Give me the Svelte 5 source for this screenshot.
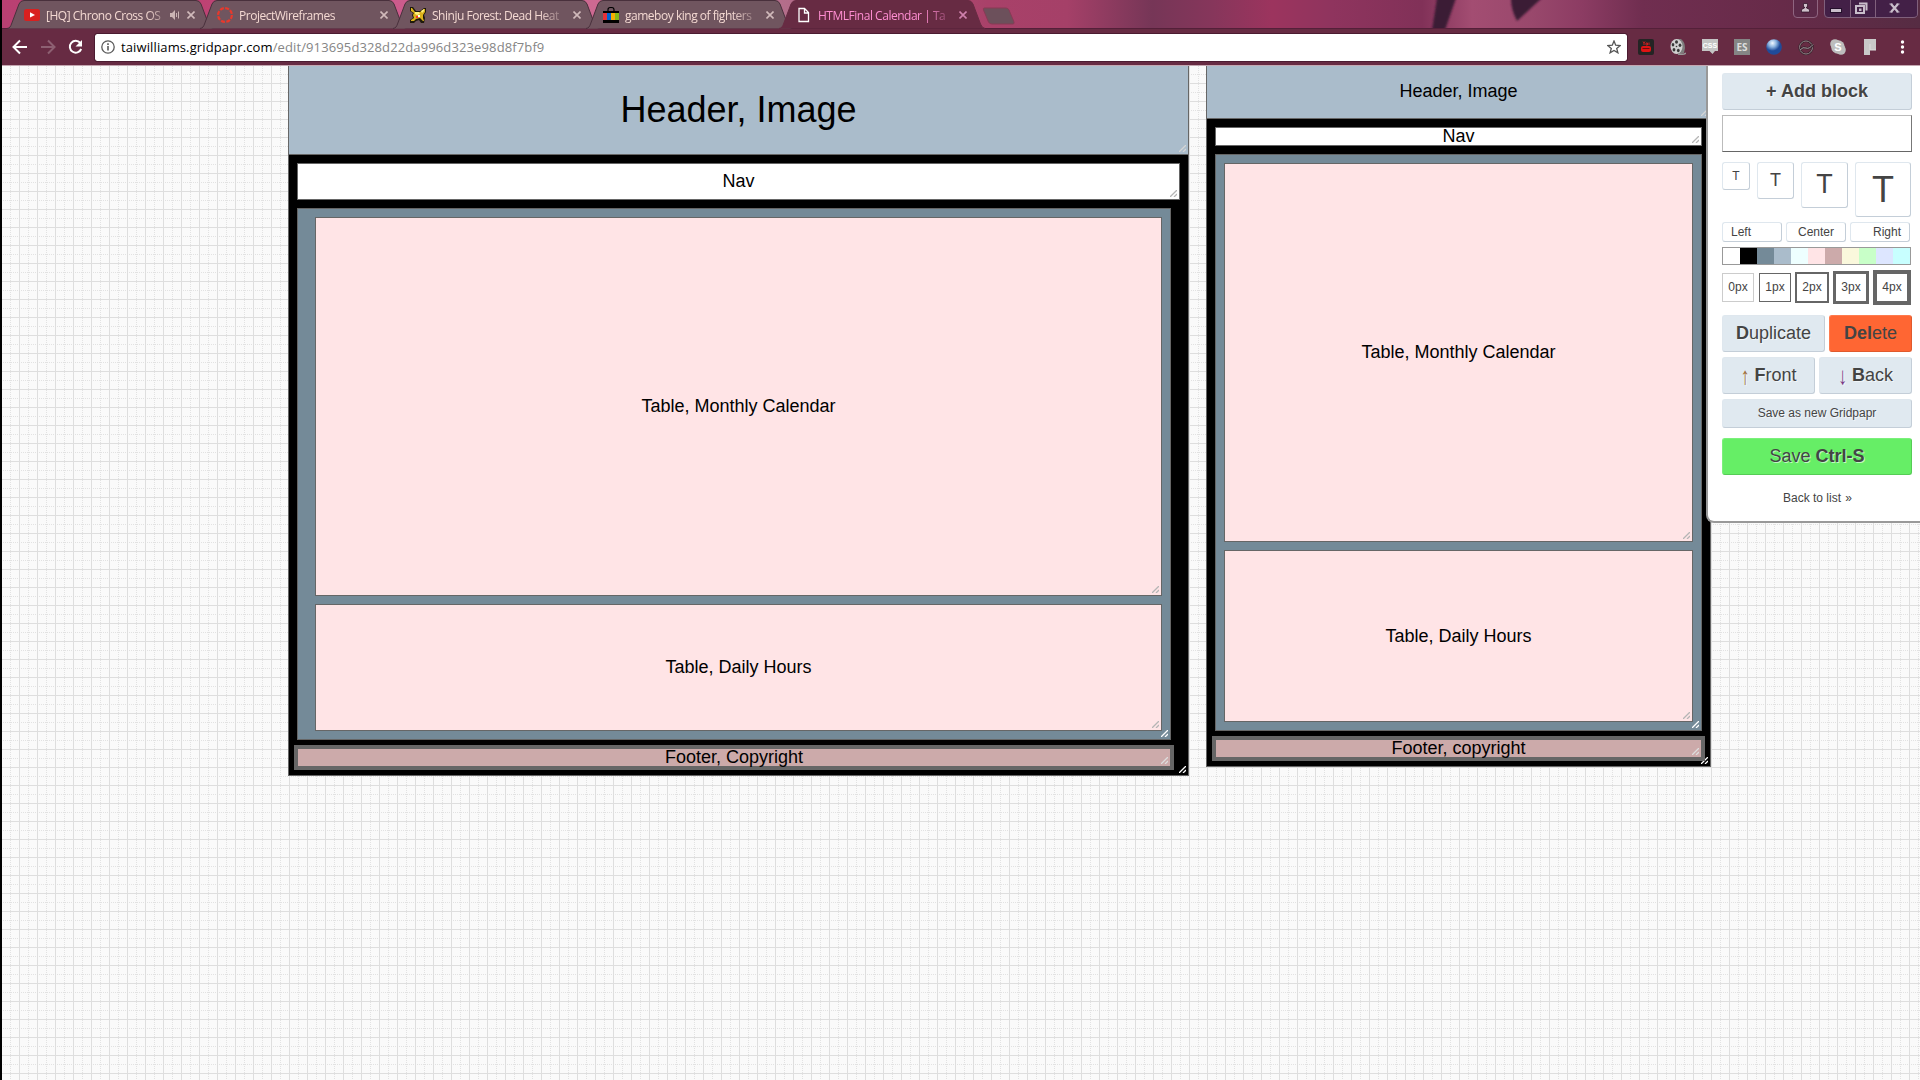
<script>
  const tabs = [
    { title: '[HQ] Chrono Cross OS', icon: 'youtube', audio: true },
    { title: 'ProjectWireframes', icon: 'ring' },
    { title: 'Shinju Forest: Dead Heat', icon: 'creature' },
    { title: 'gameboy king of fighters', icon: 'bag' },
    { title: 'HTMLFinal Calendar | Tai', icon: 'page', active: true }
  ];

  // Blocks on the free canvas: x, y, width, height in page units
  const blocks = [
    { x: 288, y: 64, w: 901, h: 712, c: 'black' },
    { x: 288, y: 64, w: 901, h: 91, c: 'sky', t: 'Header, Image', big: true },
    { x: 297, y: 163, w: 883, h: 37, c: 'white', t: 'Nav' },
    { x: 297, y: 208, w: 874, h: 532, c: 'slate' },
    { x: 315, y: 217, w: 847, h: 379, c: 'pink', t: 'Table, Monthly Calendar' },
    { x: 315, y: 604, w: 847, h: 127, c: 'pink', t: 'Table, Daily Hours' },
    { x: 294, y: 745, w: 880, h: 25, c: 'rose', t: 'Footer, Copyright', thick: true },
    { x: 1206, y: 63, w: 505, h: 704, c: 'black' },
    { x: 1206, y: 63, w: 505, h: 56, c: 'sky', t: 'Header, Image' },
    { x: 1215, y: 127, w: 487, h: 19, c: 'white', t: 'Nav' },
    { x: 1215, y: 154, w: 487, h: 577, c: 'slate' },
    { x: 1224, y: 163, w: 469, h: 379, c: 'pink', t: 'Table, Monthly Calendar' },
    { x: 1224, y: 550, w: 469, h: 172, c: 'pink', t: 'Table, Daily Hours' },
    { x: 1212, y: 736, w: 493, h: 25, c: 'rose', t: 'Footer, copyright', thick: true }
  ];

  const swatches = ['#ffffff', '#000000', '#748a98', '#aabccb', '#eeffff', '#ffe4e6', '#ccaaaa', '#faf8dc', '#c8ffc8', '#dde6ff', '#c8ffff'];
</script>

<div class="window">
  <div class="strip">
    <div class="tabs">
      {#each tabs as tab}
        <div class="tab" class:active={tab.active}>
          <svg class="shape" viewBox="0 0 206 29" width="206" height="29">
            <path d="M0 28.5 C3 28 3.500 26.500 4.500 24 L12 4 Q13.500 .5 17 .5 H189 Q192.500 .5 194 4 L201.500 24 Q203 28 206 28.500" />
          </svg>
          <svg class="fav" viewBox="0 0 16 16" width="16" height="16">
            {#if tab.icon === 'youtube'}
              <rect y="2" width="16" height="12" rx="2.500" fill="#d9201f" /><path d="M6 5.300v5.200L11 8z" fill="#fff" />
            {:else if tab.icon === 'ring'}
              <circle cx="8" cy="8" r="6.900" fill="none" stroke="#e8392c" stroke-width="2.200" stroke-dasharray="4 1.420" />
            {:else if tab.icon === 'creature'}
              <path d="M0 0h3l3 4h4l4-3h2v4l-2 3 1 3-1 5h-3l-2-3-3 1-2 2H0v-3l3-2-1-3 1-2L0 4z" fill="#1f1a0c" />
              <path d="M1 1h1l3 4h5l4-3h1v3l-2 3v3l1 3h-1l-3-3-4 1-2 2H1v-1l3-2-1-3 1-2L1 4z" fill="#dcb21c" />
              <path d="M5 5h4l1 2-3 1-2-1zM11 4l3-2v2l-2 2z" fill="#fff27c" /><rect x="6" y="9" width="2" height="2" fill="#e33" /><rect x="8" y="8" width="2" height="2" fill="#fff" />
            {:else if tab.icon === 'bag'}
              <path d="M5 4V2.500Q5 .5 8 .5T11 2.500V4" fill="none" stroke="#000" stroke-width="1.200" />
              <rect y="4" width="16" height="12" fill="#000" />
              <rect y="6" width="4" height="7" fill="#e53238" /><rect x="4" y="6" width="4" height="7" fill="#0064d2" />
              <rect x="8" y="6" width="4" height="7" fill="#f5af02" /><rect x="12" y="6" width="4" height="7" fill="#86b817" />
            {:else}
              <path d="M3 1.500h5.500l4 4V14.500H3zM8.500 1.500v4.500H12.500" fill="none" stroke="#fff" stroke-width="1.300" />
            {/if}
          </svg>
          <span class="title" class:short={tab.audio}>{tab.title}</span>
          {#if tab.audio}
            <svg class="audio" viewBox="0 0 11 10" width="11" height="10">
              <path d="M0 3h2l3-3v10L2 7H0z" fill="#cbb4b4" /><path d="M6.500 3v4M8.500 1.500v7" stroke="#cbb4b4" />
            </svg>
          {/if}
          <svg class="close" viewBox="0 0 8 8" width="8" height="8"><path d="M.5 .5l7 7M7.500 .5l-7 7" /></svg>
        </div>
      {/each}
      <svg class="newtab" viewBox="0 0 34 18" width="34" height="18">
        <path d="M2 1H24Q26 1 27 3L32 15Q32.500 17 31 17H10Q7.500 17 6.500 15L1.500 3Q1 1 2 1Z" fill="#6c505b" stroke="#873b55" />
      </svg>
    </div>
    <svg class="petals" viewBox="0 0 180 28" width="180" height="28">
      <defs><filter id="soft"><feGaussianBlur stdDeviation="1.200" /></filter></defs>
      <g filter="url(#soft)" fill="#3a1c35"><path d="M37 -2H56L45 30H32Z" /><path d="M111 -2H142Q130 9 117 21Q111 10 111 -2Z" /></g>
    </svg>
    <div class="controls">
      <svg class="user" viewBox="0 0 25 18" width="25" height="18">
        <path d="M.5 -1V14Q.5 17.500 4 17.500H21Q24.500 17.500 24.500 14V-1" fill="#5c2a49" stroke="#8f6580" />
        <path d="M10.500 3.500h4v3.500h-1v1l3 1.500v2.500h-8v-2.500l3-1.500V7h-1z" fill="#cfc1cb" stroke="#2a1024" stroke-width=".7" />
      </svg>
      <svg viewBox="0 0 94 18" width="94" height="18">
        <path d="M.5 -1V14Q.5 17.500 4 17.500H89Q93.500 17.500 93.500 14V-1M26.500 0V17M51.500 0V17" fill="#432047" stroke="#80607c" />
        <rect x="6.500" y="8.500" width="11" height="4" fill="#c9becb" stroke="#24102b" />
        <path d="M35 3.500h7.500v7M32 6h8v7h-8z" fill="none" stroke="#c9becb" stroke-width="2" /><rect x="35" y="8.500" width="2.500" height="2.500" fill="#c9becb" />
        <path d="M67 4l7 8M74 4l-7 8" stroke="#c9becb" stroke-width="2.200" />
        <path d="M65.500 4h3M72.500 4h3M65.500 12h3M72.500 12h3" stroke="#c9becb" stroke-width="1.200" />
      </svg>
    </div>
  </div>

  <div class="toolbar">
    <svg class="navicon" viewBox="0 0 16 16" width="16" height="16"><path d="M15 8H2M8 1.500L1.500 8 8 14.500" /></svg>
    <svg class="navicon dim" viewBox="0 0 16 16" width="16" height="16"><path d="M1 8h13M8 1.500L14.500 8 8 14.500" /></svg>
    <svg class="navicon" viewBox="0 0 16 16" width="16" height="16"><path d="M12.300 4A5.900 5.900 0 1 0 13.200 10" /><path d="M14 1v6.500H7.500z" class="solid" /></svg>
    <div class="address">
      <svg viewBox="0 0 14 14" width="14" height="14"><circle cx="7" cy="7" r="6.200" fill="none" stroke="#5a5a5a" stroke-width="1.300" /><path d="M7 6v4.500M7 3.200v1.700" stroke="#5a5a5a" stroke-width="1.600" /></svg>
      <span class="url"><b>taiwilliams.gridpapr.com</b>/edit/913695d328d22da996d323e98d8f7bf9</span>
      <svg viewBox="0 0 14 14" width="14" height="14"><path d="M7 1l1.700 4.200 4.500.3-3.500 2.900 1.200 4.400L7 10.400l-3.900 2.400 1.200-4.400L.8 5.500l4.500-.3z" fill="none" stroke="#555" stroke-width="1.300" /></svg>
    </div>
    <div class="extensions">
      <svg viewBox="0 0 16 16"><rect width="16" height="16" rx="2" fill="#242424" /><rect x="3" y="7" width="10" height="6" rx="2" fill="#e01414" /><path d="M5 2.500l1 1.500v2M7 2.500L6 4M8 4h1.500v2H8zM11 3.500v2.500" stroke="#c92020" fill="none" /><path d="M4.500 9.500h7" stroke="#671010" /></svg>
      <svg viewBox="0 0 16 16"><path d="M7 0h4q4 3 4 9l-1 5-5 1z" fill="#7d7d7d" /><ellipse cx="6.500" cy="7.500" rx="6" ry="7.500" fill="#d0d0d0" /><path d="M8 15q5 1 8-1" stroke="#999" stroke-width="1.500" fill="none" /><g fill="#383838"><ellipse cx="6.500" cy="3" rx="1.500" ry="1.700" /><ellipse cx="3" cy="5.800" rx="1.300" ry="1.700" /><ellipse cx="4" cy="10.800" rx="1.400" ry="1.700" /><ellipse cx="8.300" cy="11.500" rx="1.400" ry="1.700" /><ellipse cx="10" cy="6.300" rx="1.400" ry="1.700" /><circle cx="6.500" cy="7.500" r=".8" /></g></svg>
      <svg viewBox="0 0 16 16"><path d="M0 0h16v12h-3l-2.500 3L7.500 12H0z" fill="#c4c4c4" /><text x="8" y="9" text-anchor="middle" class="css">CSS</text></svg>
      <svg viewBox="0 0 16 16"><rect width="16" height="16" fill="#858585" /><text x="8" y="12" text-anchor="middle" class="es">ES</text></svg>
      <svg viewBox="0 0 16 16"><defs><radialGradient id="globe" cx=".4" cy=".25"><stop offset="0" stop-color="#f2f8ff" /><stop offset=".5" stop-color="#8db4e0" /><stop offset="1" stop-color="#1f4b9a" /></radialGradient></defs><circle cx="8" cy="8" r="7.800" fill="url(#globe)" /></svg>
      <svg viewBox="0 0 16 16"><circle cx="8" cy="8.500" r="6.500" fill="none" stroke="#33232b" stroke-width="2.200" /><circle cx="8" cy="8.500" r="6.500" fill="none" stroke="#948087" stroke-width="1" /><path d="M2 11Q5 7.500 8 9T15 5.500" fill="none" stroke="#33232b" stroke-width="2.400" /><path d="M2 11Q5 7.500 8 9T15 5.500" fill="none" stroke="#a8979e" stroke-width="1" /></svg>
      <svg viewBox="0 0 16 16"><circle cx="5" cy="5" r="4.800" fill="#bdbdbd" /><circle cx="11" cy="11" r="4.800" fill="#bdbdbd" /><circle cx="8" cy="8" r="6.800" fill="#bdbdbd" /><text x="8" y="12" text-anchor="middle" class="skype">S</text></svg>
      <svg viewBox="0 0 16 16"><path d="M2 0h12v11H8v5H2z" fill="#c9c9c9" /><path d="M8 5v6H14" fill="none" stroke="#dedede" /></svg>
      <svg viewBox="0 0 16 16"><g fill="#fff"><circle cx="8.500" cy="3" r="1.700" /><circle cx="8.500" cy="8" r="1.700" /><circle cx="8.500" cy="13" r="1.700" /></g></svg>
    </div>
  </div>

  <main class="page">
    <svg class="grid" width="1918" height="1014">
      <defs>
        <pattern id="paper" x="-1" y="0" width="18" height="18" patternUnits="userSpaceOnUse">
          <path d="M9.500 0V18M0 8.500H18" stroke="#e2e2e2" stroke-dasharray="1 1" />
          <path d="M0.500 0V18M0 17.500H18" stroke="#dedede" />
        </pattern>
      </defs>
      <rect width="1918" height="1014" fill="#fafafa" />
      <rect width="1918" height="1014" fill="url(#paper)" />
    </svg>
    <div class="canvas">
      {#each blocks as b}
        <div class="block {b.c}" class:big={b.big} class:thick={b.thick} style:left="{b.x - 2}px" style:top="{b.y - 66}px" style:width="{b.w}px" style:height="{b.h}px">
          {#if b.t}<span>{b.t}</span>{/if}
          <svg class="grip" viewBox="0 0 7 7" width="7" height="7"><path d="M0 7L7 0M4 7L7 4" /></svg>
        </div>
      {/each}
    </div>

    <aside class="panel">
      <button class="btn wide"><b>+ Add block</b></button>
      <div class="field"></div>
      <div class="sizes">
        <button class="s1">T</button><button class="s2">T</button><button class="s3">T</button><button class="s4">T</button>
      </div>
      <div class="aligns">
        <button class="left">Left</button><button>Center</button><button class="right">Right</button>
      </div>
      <div class="palette">
        {#each swatches as color}<i style:background={color}></i>{/each}
      </div>
      <div class="borders">
        <button class="b0">0px</button><button class="b1">1px</button><button class="b2">2px</button><button class="b3">3px</button><button class="b4">4px</button>
      </div>
      <div class="row"><button class="btn dup"><b>D</b>uplicate</button><button class="btn del"><b>Del</b>ete</button></div>
      <div class="row"><button class="btn half"><span class="arrow up">↑</span> <b>F</b>ront</button><button class="btn half"><span class="arrow down">↓</span> <b>B</b>ack</button></div>
      <button class="btn small">Save as new Gridpapr</button>
      <button class="btn save">Save <b>Ctrl-S</b></button>
      <div class="back">Back to list <span>»</span></div>
    </aside>
  </main>
</div>

<style>
  :global(body) { margin: 0; overflow: hidden; }
  * { box-sizing: border-box; }
  svg { display: block; flex: none; }
  .window {
    width: 1920px; height: 1080px; border-left: 2px solid #000; overflow: hidden;
    display: flex; flex-direction: column; font-family: "Liberation Sans", Arial, sans-serif; background: #fafafa;
  }
  .strip {
    position: relative; height: 28px; flex: none; display: flex; justify-content: space-between;
    background: linear-gradient(90deg, #b94072 0, #bd4273 200px, #cc5b8c 395px, #cd6991 590px, #b46e8b 780px, #a94169 985px, #a54068 1065px, #763657 1150px, #86365b 1210px, #9c345e 1270px, #8f345e 1330px, #813158 1420px, #a34d72 1470px, #99486c 1530px, #8c3c63 1580px, #702e50 1640px, #672b49 1780px, #562c43 1918px);
  }
  .tabs { display: flex; padding-left: 5px; position: relative; z-index: 1; }
  .tab { position: relative; width: 206px; height: 28px; margin-right: -13px; display: flex; align-items: center; padding: 2px 0 0 17px; color: #f4d9d2; }
  .tab.active { z-index: 2; color: #ff8ed2; }
  .shape { position: absolute; left: 0; top: 0; z-index: -1; }
  .shape path { fill: #70555f; stroke: #49303c; }
  .active .shape path { fill: #672b43; stroke: #672b43; }
  .fav { margin-right: 6px; }
  .title { flex: none; width: 128px; overflow: hidden; white-space: nowrap; font: 12px/17px "Open Sans", "Noto Sans", sans-serif; letter-spacing: -.48px; mask-image: linear-gradient(90deg, #000 84%, rgba(0, 0, 0, .3)); }
  .title.short { width: 119px; }
  .audio { margin-left: 5px; }
  .close { position: absolute; left: 180px; top: 11px; }
  .close path { stroke: #d1babb; stroke-width: 1.6; }
  .active .close path { stroke: #cf81ad; }
  .newtab { margin: 7px 0 0 10px; }
  .petals { position: absolute; left: 1398px; top: 0; }
  .controls { display: flex; gap: 6px; margin-right: 2px; position: relative; }
  .toolbar { height: 38px; flex: none; display: flex; align-items: center; background: #672b43; border-top: 1px solid #542039; border-bottom: 1px solid #c4a7b1; padding: 0 0 0 10px; }
  .navicon { margin-right: 12px; }
  .navicon path { fill: none; stroke: #fff; stroke-width: 2; }
  .navicon path.solid { fill: #fff; stroke: none; }
  .dim { opacity: .25; }
  .address { width: 1532px; height: 27px; background: #fff; border-radius: 2px; outline: 1px solid #4b1b31; margin-left: -1px; padding: 0 6px 0 6px; display: flex; align-items: center; }
  .url { flex: 1; margin-left: 6px; color: #858585; font: 13px/20px "Open Sans", "Noto Sans", sans-serif; letter-spacing: .12px; white-space: nowrap; }
  .url b { color: #000; font-weight: 400; }
  .extensions { display: flex; gap: 16px; margin-left: 11px; }
  .extensions svg { width: 16px; height: 16px; }
  .css { font: bold 7px "Liberation Sans", sans-serif; fill: #fff; }
  .es { font: bold 10px "Open Sans", sans-serif; fill: #ddd; }
  .skype { font: bold 11px "Liberation Sans", sans-serif; fill: #fff; }

  .page { position: relative; flex: 1; overflow: hidden; display: flex; justify-content: flex-end; align-items: flex-start; }
  .grid, .canvas { position: absolute; inset: 0; }
  .block { position: absolute; border: 1px solid #666; display: flex; align-items: center; justify-content: center; color: #000; font-size: 18px; line-height: 20px; padding-bottom: 1px; white-space: nowrap; }
  .block.big { font-size: 36px; line-height: 40px; padding-bottom: 0; }
  .block.thick { border-width: 4px; }
  .black { background: #000; }
  .sky { background: #aabccb; }
  .white { background: #fff; }
  .slate { background: #748a98; }
  .pink { background: #ffe4e6; }
  .rose { background: #ccaaaa; }
  .grip { position: absolute; right: 2px; bottom: 2px; }
  .grip path { stroke: #b5b5b5; stroke-width: 1.3; }
  .black .grip path, .slate .grip path { stroke: #fff; }
  .sky .grip path { stroke: #d5d5d5; }
  .rose .grip path { stroke: #ddd; }

  .panel { position: relative; width: 214px; height: 457px; background: #fff; border-left: 2px solid #999; border-bottom: 2px solid #999; border-bottom-left-radius: 8px; padding: 7px 8px 0 14px; display: flex; flex-direction: column; color: #444; }
  button { font: 12px/14px "Liberation Sans", Arial, sans-serif; color: #444; padding: 0; margin: 0; background: #fff; border: 1px solid #dfe7ee; border-right-color: #c4ced8; border-bottom-color: #c4ced8; border-radius: 3px; display: block; flex: none; white-space: nowrap; }
  .btn { height: 37px; background: #e0e9f0; font-size: 18px; line-height: 35px; text-shadow: 1px 1px 0 rgba(255, 255, 255, .6); }
  .field { height: 37px; margin: 5px 0 10px; border: 1px solid #bbb; border-right-color: #777; border-bottom-color: #666; flex: none; }
  .sizes { display: flex; align-items: flex-start; height: 60px; }
  .s1 { width: 28px; height: 28px; margin-right: 7px; padding-bottom: 1px; }
  .s2 { width: 37px; height: 37px; margin-right: 7px; font-size: 18px; padding-bottom: 1px; }
  .s3 { width: 47px; height: 46px; margin-right: 7px; font-size: 27px; line-height: 30px; padding-bottom: 2px; }
  .s4 { width: 56px; height: 55px; font-size: 36px; line-height: 40px; }
  .aligns { display: flex; gap: 4px; height: 25px; }
  .aligns button { width: 60px; height: 20px; padding: 0 8px 1px; }
  .aligns .left { text-align: left; }
  .aligns .right { text-align: right; }
  .palette { width: 189px; height: 18px; border: 1px solid #999; display: flex; margin-bottom: 5px; }
  .palette i { flex: 1; }
  .borders { display: flex; align-items: center; height: 35px; width: 189px; margin-bottom: 10px; }
  .borders button { border: 1px solid #ccc; border-radius: 0; width: 32px; height: 29px; padding-bottom: 1px; }
  .borders .b0 { margin-right: 5px; }
  .borders .b1 { border-color: #666; margin-right: 4px; }
  .borders .b2 { border: 2px solid #666; width: 34px; height: 31px; margin-right: 4px; }
  .borders .b3 { border: 3px solid #666; width: 36px; height: 33px; margin-right: 4px; }
  .borders .b4 { border: 4px solid #666; width: 38px; height: 35px; }
  .row { display: flex; gap: 4px; margin-bottom: 5px; }
  .dup { width: 103px; }
  .del { width: 83px; background: #ff6633; border-color: #ff7a4d #e05a2d #e05a2d #ff7a4d; text-shadow: none; }
  .half { width: 93px; }
  .arrow { display: inline-block; line-height: 20px; transform: translateY(1px) scaleY(1.35); }
  .up { color: #a0703c; }
  .down { color: #7b3c86; }
  .small { height: 29px; font-size: 12px; line-height: 26px; padding-bottom: 1px; margin-bottom: 10px; }
  .save { background: #66ee66; border-color: #7bf07b #55cc55 #55cc55 #7bf07b; }
  .back { margin-top: 16px; font-size: 12px; line-height: 14px; text-align: center; padding-left: 1px; }
  .back span { margin-left: 1px; }
</style>
